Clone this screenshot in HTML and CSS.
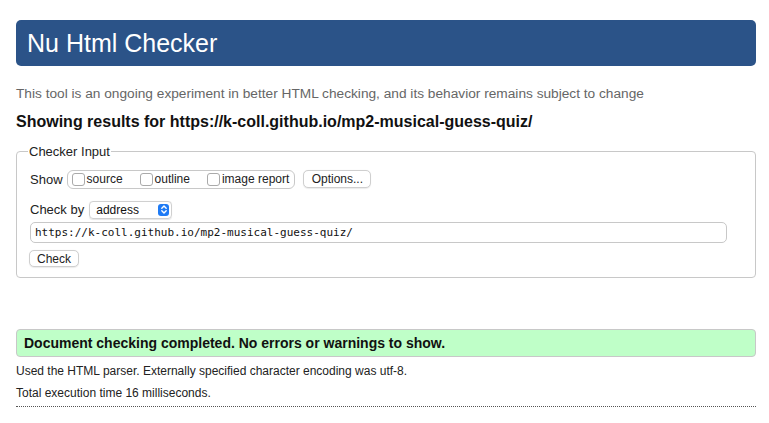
FILE: index.html
```html
<!DOCTYPE html>
<html lang="en">
<head>
<meta charset="utf-8">
<title>Nu Html Checker</title>
<link rel="stylesheet" href="styles.css">
</head>
<body>
<h1 class="header">Nu Html Checker</h1>
<p class="intro">This tool is an ongoing experiment in better HTML checking, and its behavior remains subject to change</p>
<h2 class="results">Showing results for https://k-coll.github.io/mp2-musical-guess-quiz/</h2>
<fieldset class="checker">
  <legend class="legend">Checker Input</legend>
  <div class="row show-row">
    <span class="label">Show</span>
    <span class="group">
      <span class="opt"><span class="cb"></span>source</span>
      <span class="opt"><span class="cb"></span>outline</span>
      <span class="opt"><span class="cb"></span>image report</span>
    </span>
    <span class="btn options">Options...</span>
  </div>
  <div class="row by-row">
    <span class="label">Check by</span>
    <span class="select">address<span class="sel-icon"><svg width="10" height="11" viewBox="0 0 10 11"><path d="M2.8 4.2 L5 2 L7.2 4.2 M2.8 6.8 L5 9 L7.2 6.8" fill="none" stroke="#fff" stroke-width="1.4" stroke-linecap="round" stroke-linejoin="round"/></svg></span></span>
  </div>
  <div class="url">https://k-coll.github.io/mp2-musical-guess-quiz/</div>
  <div class="row"><span class="btn check">Check</span></div>
</fieldset>
<div class="success">Document checking completed. No errors or warnings to show.</div>
<p class="meta">Used the HTML parser. Externally specified character encoding was utf-8.</p>
<p class="meta">Total execution time 16 milliseconds.</p>
<div class="rule"></div>
</body>
</html>
```
FILE: styles.css
```css
html, body { margin: 0; padding: 0; background: #fff; }
body {
  padding: 20px 13px 0 16px;
  font-family: "Liberation Sans", Arial, sans-serif;
  color: #111;
}
.header {
  margin: 0;
  height: 46px;
  background: #2b5388;
  border-radius: 5px;
  color: #fff;
  font-weight: normal;
  font-size: 25px;
  line-height: 46px;
  padding-left: 11px;
}
.intro {
  margin: 20px 0 0 0;
  font-size: 13.7px;
  line-height: 16px;
  color: #666;
}
.results {
  margin: 10px 0 0 0;
  font-size: 16px;
  line-height: 20px;
  font-weight: bold;
  color: #111;
}
.checker {
  margin: 12px 0 0 0;
  border: 1px solid #c8c8c8;
  border-radius: 4px;
  padding: 0 13px 10px 13px;
  min-width: 0;
}
.legend {
  font-size: 13px;
  padding: 0 1px;
  margin-left: -2px;
  color: #222;
  line-height: 15px;
}
.row {
  display: flex;
  align-items: center;
  font-size: 13px;
}
.label { color: #222; }
.show-row { height: 20px; margin-top: 10px; }
.group {
  display: flex;
  align-items: center;
  height: 17px;
  margin-left: 4px;
  border: 1px solid #c8c8c8;
  border-radius: 6px;
  padding: 0 5px 0 4px;
  font-size: 12px;
  color: #222;
}
.opt { display: flex; align-items: center; margin-right: 17px; }
.opt:last-child { margin-right: 0; }
.cb {
  width: 11px;
  height: 11px;
  border: 1px solid #aaa;
  border-radius: 3px;
  margin-right: 2px;
  background: #fff;
}
.btn {
  display: inline-flex;
  align-items: center;
  justify-content: center;
  border: 1px solid #cfcfcf;
  border-radius: 5px;
  background: #fff;
  font-size: 12px;
  color: #222;
  box-shadow: 0 0.5px 1px rgba(0,0,0,0.08);
}
.options { margin-left: 8px; width: 66px; height: 16px; }
.by-row { margin-top: 12px; height: 17px; }
.select {
  display: flex;
  align-items: center;
  justify-content: space-between;
  margin-left: 5px;
  width: 73px;
  height: 16px;
  border: 1px solid #d0d0d0;
  border-radius: 4px;
  padding: 0 2px 0 6px;
  font-size: 12px;
  color: #111;
  box-shadow: 0 0.5px 1px rgba(0,0,0,0.1);
}
.sel-icon {
  display: flex;
  align-items: center;
  justify-content: center;
  width: 11px;
  height: 12px;
  background: #1f7bf5;
  border-radius: 3px;
}
.url {
  margin-top: 4px;
  height: 19px;
  border: 1px solid #c8c8c8;
  border-radius: 5px;
  padding-left: 4px;
  font-family: "DejaVu Sans Mono", monospace;
  font-size: 11px;
  line-height: 19px;
  color: #111;
  width: 691px;
}
.check { margin-top: 7px; margin-left: -1px; width: 48px; height: 15px; }
.success {
  margin-top: 51px;
  height: 26px;
  border: 1px solid #c8c8c8;
  border-radius: 4px;
  background: #bfffc8;
  font-size: 14px;
  font-weight: bold;
  line-height: 26px;
  padding-left: 7px;
  color: #111;
}
.meta {
  margin: 7px 0 0 0;
  font-size: 12px;
  line-height: 15px;
  color: #222;
}
.meta + .meta { margin-top: 7px; }
.rule {
  margin-top: 5px;
  border-top: 1px dotted #555;
}
```
